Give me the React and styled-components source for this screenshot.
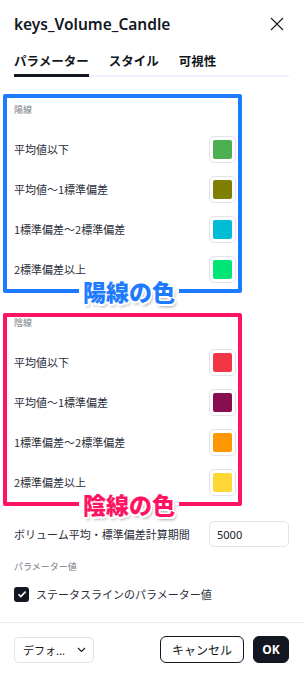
import React from "react";
import styled, { createGlobalStyle } from "styled-components";

const GlobalStyle = createGlobalStyle`
  html, body {
    margin: 0;
    padding: 0;
    background: #ffffff;
  }
  body {
    font-family: "Noto Sans", "Noto Sans CJK JP", sans-serif;
    color: #131722;
  }
`;

const Dialog = styled.div`
  width: 304px;
  height: 675px;
  background: #fff;
  display: flex;
  flex-direction: column;
  overflow: hidden;
`;

const Header = styled.div`
  display: flex;
  align-items: center;
  justify-content: space-between;
  height: 20px;
  padding: 14px 20px 0 14px;
`;

const Title = styled.h1`
  margin: 0;
  font-size: 15.5px;
  font-weight: 600;
  line-height: 20px;
  color: #131722;
`;

const CloseButton = styled.button`
  border: 0;
  background: none;
  padding: 0;
  width: 14px;
  height: 14px;
  display: flex;
  color: #131722;
`;

const TabBar = styled.div`
  display: flex;
  gap: 20px;
  margin: 18px 15px 0 14px;
  box-shadow: inset 0 -2px 0 #f0f3fa;
`;

const Tab = styled.div`
  font-family: "Noto Sans CJK JP", sans-serif;
  font-size: 12.5px;
  font-weight: 700;
  line-height: 18px;
  padding-bottom: 4px;
  border-bottom: 3px solid ${({ $active }) => ($active ? "#131722" : "transparent")};
  color: #131722;
`;

const Section = styled.div`
  position: relative;
  margin: ${({ $top }) => $top}px 0 0 3px;
  width: 222px;
  border: 4px solid ${({ $color }) => $color};
  border-radius: 2px;
  padding: ${({ $pad }) => $pad}px 2px 0 7px;
`;

const GroupLabel = styled.div`
  font-family: "Noto Sans CJK JP", sans-serif;
  font-size: 9px;
  line-height: ${({ $lh }) => $lh}px;
  color: #787b86;
  margin-bottom: ${({ $gap }) => $gap}px;
`;

const Row = styled.div`
  display: flex;
  align-items: center;
  justify-content: space-between;
  height: 40px;
`;

const RowText = styled.span`
  font-family: "Noto Sans CJK JP", sans-serif;
  font-size: 11px;
  color: #2a2e39;
`;

const Swatch = styled.div`
  box-sizing: border-box;
  width: 27px;
  height: 27px;
  border: 1px solid #e0e3eb;
  border-radius: 5px;
  display: flex;
  align-items: center;
  justify-content: center;

  &::after {
    content: "";
    width: 19px;
    height: 19px;
    border-radius: 2px;
    background: ${({ $color }) => $color};
  }
`;

const Annotation = styled.div`
  position: absolute;
  left: 72px;
  bottom: -2px;
  transform: translateY(50%);
  padding: 0 4px;
  background: #fff;
  font-family: "Noto Sans CJK JP", sans-serif;
  font-size: 23px;
  font-weight: 900;
  line-height: 24px;
  color: ${({ $color }) => $color};
  text-shadow: 1.5px 0 0 #fff, -1.5px 0 0 #fff, 0 1.5px 0 #fff, 0 -1.5px 0 #fff,
    1.5px 1.5px 0 #fff, -1.5px -1.5px 0 #fff, 1.5px -1.5px 0 #fff, -1.5px 1.5px 0 #fff,
    2px 3px 3px rgba(0, 0, 0, 0.35);
`;

const Body = styled.div`
  padding: 0 15px 0 14px;
`;

const FieldRow = styled.div`
  display: flex;
  align-items: center;
  justify-content: space-between;
  margin-top: 15px;
  height: 26px;
`;

const Input = styled.div`
  box-sizing: border-box;
  width: 80px;
  height: 26px;
  border: 1px solid #e0e3eb;
  border-radius: 5px;
  padding-left: 7px;
  display: flex;
  align-items: center;
  font-size: 11px;
  color: #131722;
`;

const SmallLabel = styled.div`
  font-family: "Noto Sans CJK JP", sans-serif;
  font-size: 9px;
  line-height: 12px;
  color: #787b86;
  margin-top: 14px;
`;

const CheckRow = styled.label`
  display: flex;
  align-items: center;
  gap: 7px;
  margin-top: 13px;
  height: 16px;
`;

const CheckBox = styled.span`
  width: 15px;
  height: 15px;
  border-radius: 3px;
  background: #131722;
  display: flex;
  align-items: center;
  justify-content: center;
`;

const Divider = styled.div`
  height: 1px;
  background: #ebedf2;
  margin-top: 20px;
`;

const Footer = styled.div`
  display: flex;
  align-items: center;
  padding: 13px 15px 0 14px;
  gap: 9px;
`;

const Select = styled.div`
  box-sizing: border-box;
  width: 80px;
  height: 26px;
  border: 1px solid #e0e3eb;
  border-radius: 5px;
  padding: 0 7px 0 8px;
  display: flex;
  align-items: center;
  justify-content: space-between;
  font-family: "Noto Sans CJK JP", sans-serif;
  font-size: 11px;
  color: #131722;
  margin-right: auto;
`;

const Button = styled.button`
  box-sizing: border-box;
  height: 27px;
  border-radius: 6px;
  padding: 0;
  width: ${({ $w }) => $w}px;
  border: 1px solid #131722;
  background: ${({ $primary }) => ($primary ? "#131722" : "#fff")};
  color: ${({ $primary }) => ($primary ? "#fff" : "#131722")};
  font-family: "Noto Sans", "Noto Sans CJK JP", sans-serif;
  font-size: 12px;
  font-weight: ${({ $primary }) => ($primary ? 700 : 400)};
`;

const upColors = [
  ["平均値以下", "#4caf50"],
  ["平均値～1標準偏差", "#808000"],
  ["1標準偏差～2標準偏差", "#00bcd4"],
  ["2標準偏差以上", "#00e676"],
];

const downColors = [
  ["平均値以下", "#f23645"],
  ["平均値～1標準偏差", "#880e4f"],
  ["1標準偏差～2標準偏差", "#ff9800"],
  ["2標準偏差以上", "#fdd835"],
];

const ColorGroup = ({ label, rows, border, note, top, pad, lh, gap }) => (
  <Section $color={border} $top={top} $pad={pad}>
    <GroupLabel $lh={lh} $gap={gap}>{label}</GroupLabel>
    {rows.map(([text, color]) => (
      <Row key={text}>
        <RowText>{text}</RowText>
        <Swatch $color={color} />
      </Row>
    ))}
    <Annotation $color={border}>{note}</Annotation>
  </Section>
);

export default function App() {
  return (
    <Dialog>
      <GlobalStyle />
      <Header>
        <Title>keys_Volume_Candle</Title>
        <CloseButton>
          <svg width="14" height="14" viewBox="0 0 14 14">
            <path d="M1 1l12 12M13 1L1 13" stroke="currentColor" strokeWidth="1.1" />
          </svg>
        </CloseButton>
      </Header>

      <TabBar>
        <Tab $active>パラメーター</Tab>
        <Tab>スタイル</Tab>
        <Tab>可視性</Tab>
      </TabBar>

      <ColorGroup
        label="陽線"
        rows={upColors}
        border="#1e7bff"
        note="陽線の色"
        top={17}
        pad={5}
        lh={14}
        gap={12}
      />
      <ColorGroup
        label="陰線"
        rows={downColors}
        border="#ff1464"
        note="陰線の色"
        top={20}
        pad={0}
        lh={12}
        gap={13}
      />

      <Body>
        <FieldRow>
          <RowText>ボリューム平均・標準偏差計算期間</RowText>
          <Input>5000</Input>
        </FieldRow>
        <SmallLabel>パラメーター値</SmallLabel>
        <CheckRow>
          <CheckBox>
            <svg width="10" height="10" viewBox="0 0 10 10">
              <path d="M1.5 5.2l2.3 2.3L8.6 2.6" fill="none" stroke="#fff" strokeWidth="1.6" />
            </svg>
          </CheckBox>
          <RowText>ステータスラインのパラメーター値</RowText>
        </CheckRow>
      </Body>

      <Divider />

      <Footer>
        <Select>
          <span>デフォ...</span>
          <svg width="9" height="6" viewBox="0 0 9 6">
            <path d="M1 1l3.5 3.5L8 1" fill="none" stroke="#131722" strokeWidth="1.1" />
          </svg>
        </Select>
        <Button $w={84}>キャンセル</Button>
        <Button $w={36} $primary>OK</Button>
      </Footer>
    </Dialog>
  );
}
